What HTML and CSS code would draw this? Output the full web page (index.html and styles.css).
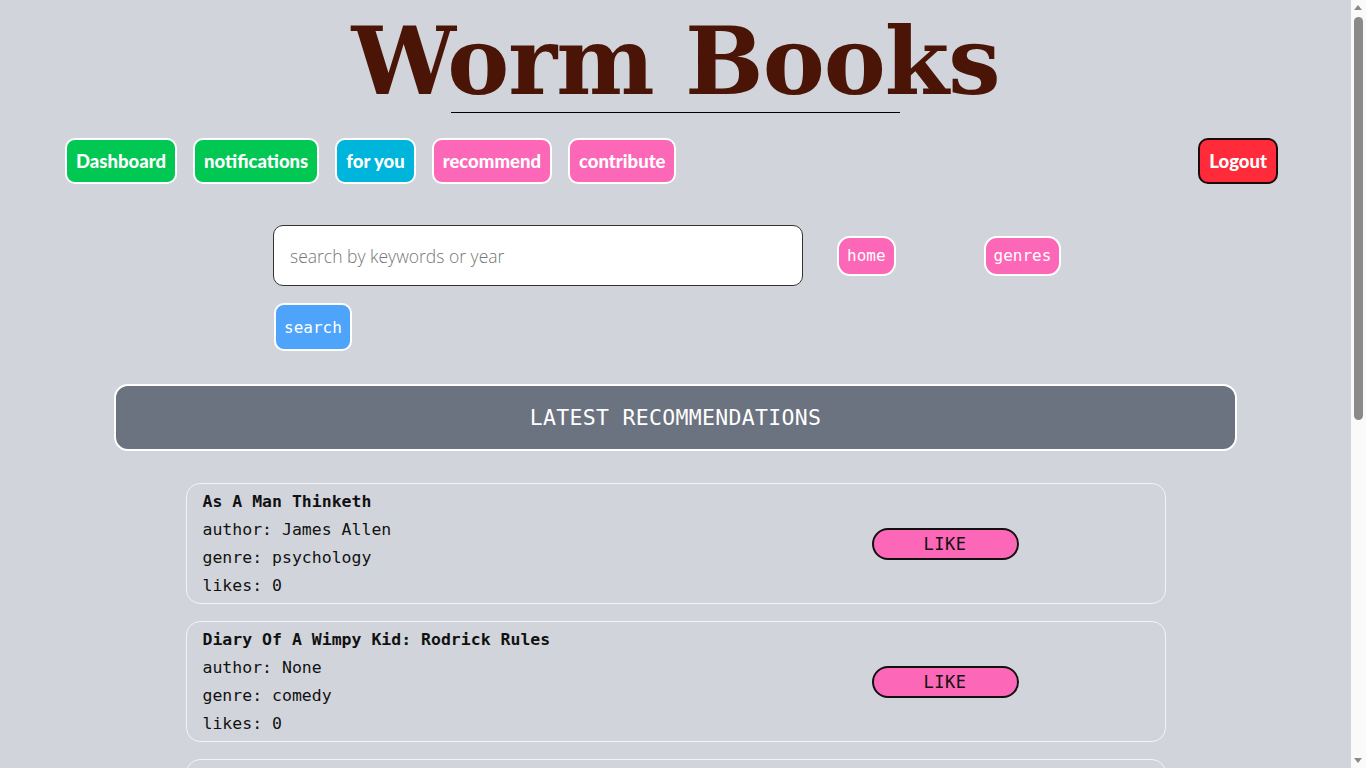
FILE: index.html
```html
<!DOCTYPE html>
<html lang="en">
<head>
<meta charset="utf-8">
<title>Worm Books</title>
<link rel="stylesheet" href="styles.css">
</head>
<body>
<div class="page">
<header class="masthead">
  <h1 class="brand">Worm Books</h1>
  <hr class="brand-rule">
</header>

<nav class="topnav">
  <a class="nav-btn green" href="#">Dashboard</a>
  <a class="nav-btn green" href="#">notifications</a>
  <a class="nav-btn cyan" href="#">for you</a>
  <a class="nav-btn pink" href="#">recommend</a>
  <a class="nav-btn pink" href="#">contribute</a>
  <a class="nav-btn logout" href="#">Logout</a>
</nav>

<section class="search-area">
  <div class="search-row">
    <input class="search-input" type="text" placeholder="search by keywords or year">
    <a class="small-btn pink home" href="#">home</a>
    <a class="small-btn pink genres" href="#">genres</a>
  </div>
  <button class="small-btn blue search-btn">search</button>
</section>

<h2 class="section-bar">LATEST RECOMMENDATIONS</h2>

<main class="cards">
  <article class="card">
    <div class="card-info">
      <div class="card-title">As A Man Thinketh</div>
      <div>author: James Allen</div>
      <div>genre: psychology</div>
      <div>likes: 0</div>
    </div>
    <button class="like-btn">LIKE</button>
  </article>
  <article class="card">
    <div class="card-info">
      <div class="card-title">Diary Of A Wimpy Kid: Rodrick Rules</div>
      <div>author: None</div>
      <div>genre: comedy</div>
      <div>likes: 0</div>
    </div>
    <button class="like-btn">LIKE</button>
  </article>
  <article class="card">
    <div class="card-info">
      <div class="card-title">The Alchemist</div>
      <div>author: Paulo Coelho</div>
      <div>genre: fiction</div>
      <div>likes: 0</div>
    </div>
    <button class="like-btn">LIKE</button>
  </article>
  <article class="card">
    <div class="card-info">
      <div class="card-title">Atomic Habits</div>
      <div>author: James Clear</div>
      <div>genre: self-help</div>
      <div>likes: 0</div>
    </div>
    <button class="like-btn">LIKE</button>
  </article>
  <article class="card">
    <div class="card-info">
      <div class="card-title">Sapiens</div>
      <div>author: Yuval Noah Harari</div>
      <div>genre: history</div>
      <div>likes: 0</div>
    </div>
    <button class="like-btn">LIKE</button>
  </article>
</main>
</div>

<div class="scrollbar" aria-hidden="true">
  <span class="sb-arrow up"></span>
  <span class="sb-thumb"></span>
  <span class="sb-arrow down"></span>
</div>
</body>
</html>
```

FILE: styles.css
```css
html, body {
  margin: 0;
  padding: 0;
}

body {
  background: #d1d5db;
  font-family: "DejaVu Sans Mono", monospace;
}

.page {
  margin-right: 15px;
  padding-bottom: 40px;
}

.masthead {
  text-align: center;
}

.brand {
  margin: 0;
  padding-top: 6px;
  line-height: 112px;
  font-family: "DejaVu Serif", "Liberation Serif", serif;
  font-weight: bold;
  font-size: 93px;
  letter-spacing: -1px;
  color: #4a1406;
}

.brand-rule {
  width: 33.3%;
  margin: -6px auto 0;
  height: 0;
  border: none;
  border-top: 1px solid #000;
}

.topnav {
  display: flex;
  align-items: center;
  gap: 16px;
  margin-top: 25px;
  padding: 0 73px 0 65px;
}

.nav-btn {
  box-sizing: border-box;
  height: 46px;
  display: flex;
  align-items: center;
  padding: 0 9px;
  border: 2px solid #fff;
  border-radius: 10px;
  color: #fff;
  text-decoration: none;
  font-family: "Lato", "Liberation Sans", sans-serif;
  font-weight: 900;
  font-size: 18.5px;
}

.green { background: #00c853; }
.cyan { background: #00b5dc; }
.pink { background: #fc67b8; }

.logout {
  margin-left: auto;
  background: #ff2b3a;
  border-color: #1a0a0a;
}

.search-area {
  margin-top: 41px;
  padding-left: 273px;
}

.search-row {
  display: flex;
  align-items: center;
}

.search-input {
  box-sizing: border-box;
  width: 530px;
  height: 61px;
  border: 1px solid #333;
  border-radius: 10px;
  background: #fff;
  padding: 0 16px;
  font-family: "Open Sans", sans-serif;
  font-size: 17.5px;
  color: #333;
  outline: none;
}

.search-input::placeholder {
  color: #767676;
  font-weight: 300;
}

.small-btn {
  box-sizing: border-box;
  display: inline-flex;
  align-items: center;
  justify-content: center;
  border: 2px solid #fff;
  color: #fff;
  text-decoration: none;
  font-family: "DejaVu Sans Mono", monospace;
  font-size: 16px;
}

.home,
.genres {
  height: 40px;
  padding: 0 8px;
  border-radius: 13px;
}

.home { margin-left: 34px; }
.genres { margin-left: 88px; }

.blue { background: #4ea3fb; }

.search-btn {
  margin-top: 17px;
  margin-left: 1px;
  height: 48px;
  padding: 0 8px;
  border-radius: 10px;
  cursor: pointer;
}

.section-bar {
  box-sizing: border-box;
  margin: 33px 114px 0;
  height: 67px;
  display: flex;
  align-items: center;
  justify-content: center;
  background: #6b7280;
  border: 2px solid #fff;
  border-radius: 14px;
  color: #fff;
  font-family: "DejaVu Sans Mono", monospace;
  font-weight: normal;
  font-size: 21.5px;
  letter-spacing: 0.3px;
}

.cards {
  width: 980px;
  margin: 32px auto 0;
  display: flex;
  flex-direction: column;
  gap: 17px;
}

.card {
  box-sizing: border-box;
  height: 121px;
  display: flex;
  align-items: center;
  padding: 0 146px 0 16px;
  border: 1px solid #f3f4f6;
  border-radius: 14px;
}

.card-info {
  flex: 1;
  font-size: 16.5px;
  line-height: 28px;
  color: #111;
  padding-top: 1px;
}

.card-title {
  font-weight: bold;
}

.like-btn {
  box-sizing: border-box;
  width: 147px;
  height: 32px;
  background: #fc67b8;
  border: 2px solid #111;
  border-radius: 16px;
  font-family: "DejaVu Sans Mono", monospace;
  font-size: 17px;
  color: #111;
  letter-spacing: 0.5px;
  cursor: pointer;
}

/* fake browser scrollbar, overlaying the window edge */
.scrollbar {
  position: fixed;
  top: 0;
  right: 0;
  width: 15px;
  height: 100vh;
  background: #fafafa;
}

.sb-thumb {
  position: absolute;
  top: 17px;
  left: 3px;
  width: 9px;
  height: 403px;
  border-radius: 5px;
  background: #8a8a8a;
}

.sb-arrow {
  position: absolute;
  left: 3px;
  width: 0;
  height: 0;
  border-left: 4.5px solid transparent;
  border-right: 4.5px solid transparent;
}

.sb-arrow.up {
  top: 5px;
  border-bottom: 5px solid #8a8a8a;
}

.sb-arrow.down {
  bottom: 5px;
  border-top: 5px solid #8a8a8a;
}
```
